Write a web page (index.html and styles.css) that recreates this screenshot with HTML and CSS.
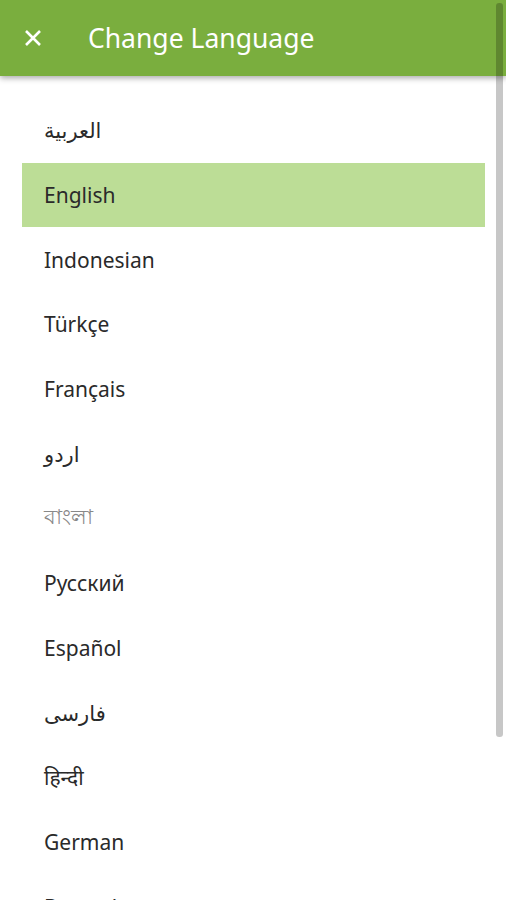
FILE: index.html
```html
<!DOCTYPE html>
<html lang="en">
<head>
    <meta charset="UTF-8">
    <meta name="viewport" content="width=device-width, initial-scale=1.0">
    <title>Change Language</title>
    <link rel="stylesheet" href="styles.css">
</head>
<body>
    <div class="topbar">
        <svg class="close" width="24" height="24" viewBox="0 0 24 24">
            <path d="M5 5 L19 19 M19 5 L5 19" stroke="#fff" stroke-width="2.6" stroke-linecap="butt"/>
        </svg>
        <div class="title">Change Language</div>
    </div>

    <ul class="langs">
        <li>العربية</li>
        <li class="selected">English</li>
        <li>Indonesian</li>
        <li>Türkçe</li>
        <li>Français</li>
        <li>اردو</li>
        <li class="faded">বাংলা</li>
        <li>Русский</li>
        <li>Español</li>
        <li>فارسی</li>
        <li>हिन्दी</li>
        <li>German</li>
        <li>Deutsch</li>
    </ul>

    <div class="scrollbar"></div>
</body>
</html>
```

FILE: styles.css
```css
body {
    margin: 0;
    height: 900px;
    overflow: hidden;
    background-color: #fff;
    font-family: "Noto Sans", "Open Sans", "DejaVu Sans", sans-serif;
    color: #2a2a2a;
}
.topbar {
    height: 76px;
    background-color: #7aae3e;
    display: flex;
    align-items: center;
    padding-left: 21px;
    box-shadow: 0 2px 6px rgba(0, 0, 0, 0.35);
    position: relative;
    z-index: 1;
}
.close {
    margin-right: 43px;
}
.title {
    color: #fff;
    font-size: 26.5px;
    margin-top: 0;
}
.langs {
    list-style: none;
    margin: 22px 21px 0 22px;
    padding: 0;
}
.langs li {
    height: 64.7px;
    display: flex;
    align-items: center;
    padding-left: 22px;
    font-size: 21px;
}
.langs li.selected {
    background-color: #bcdd96;
}
.langs li.faded {
    color: #888;
}
.scrollbar {
    position: absolute;
    top: 3px;
    left: 496px;
    width: 7px;
    height: 734px;
    background-color: rgba(0, 0, 0, 0.22);
    border-radius: 3px;
    z-index: 2;
}
```
